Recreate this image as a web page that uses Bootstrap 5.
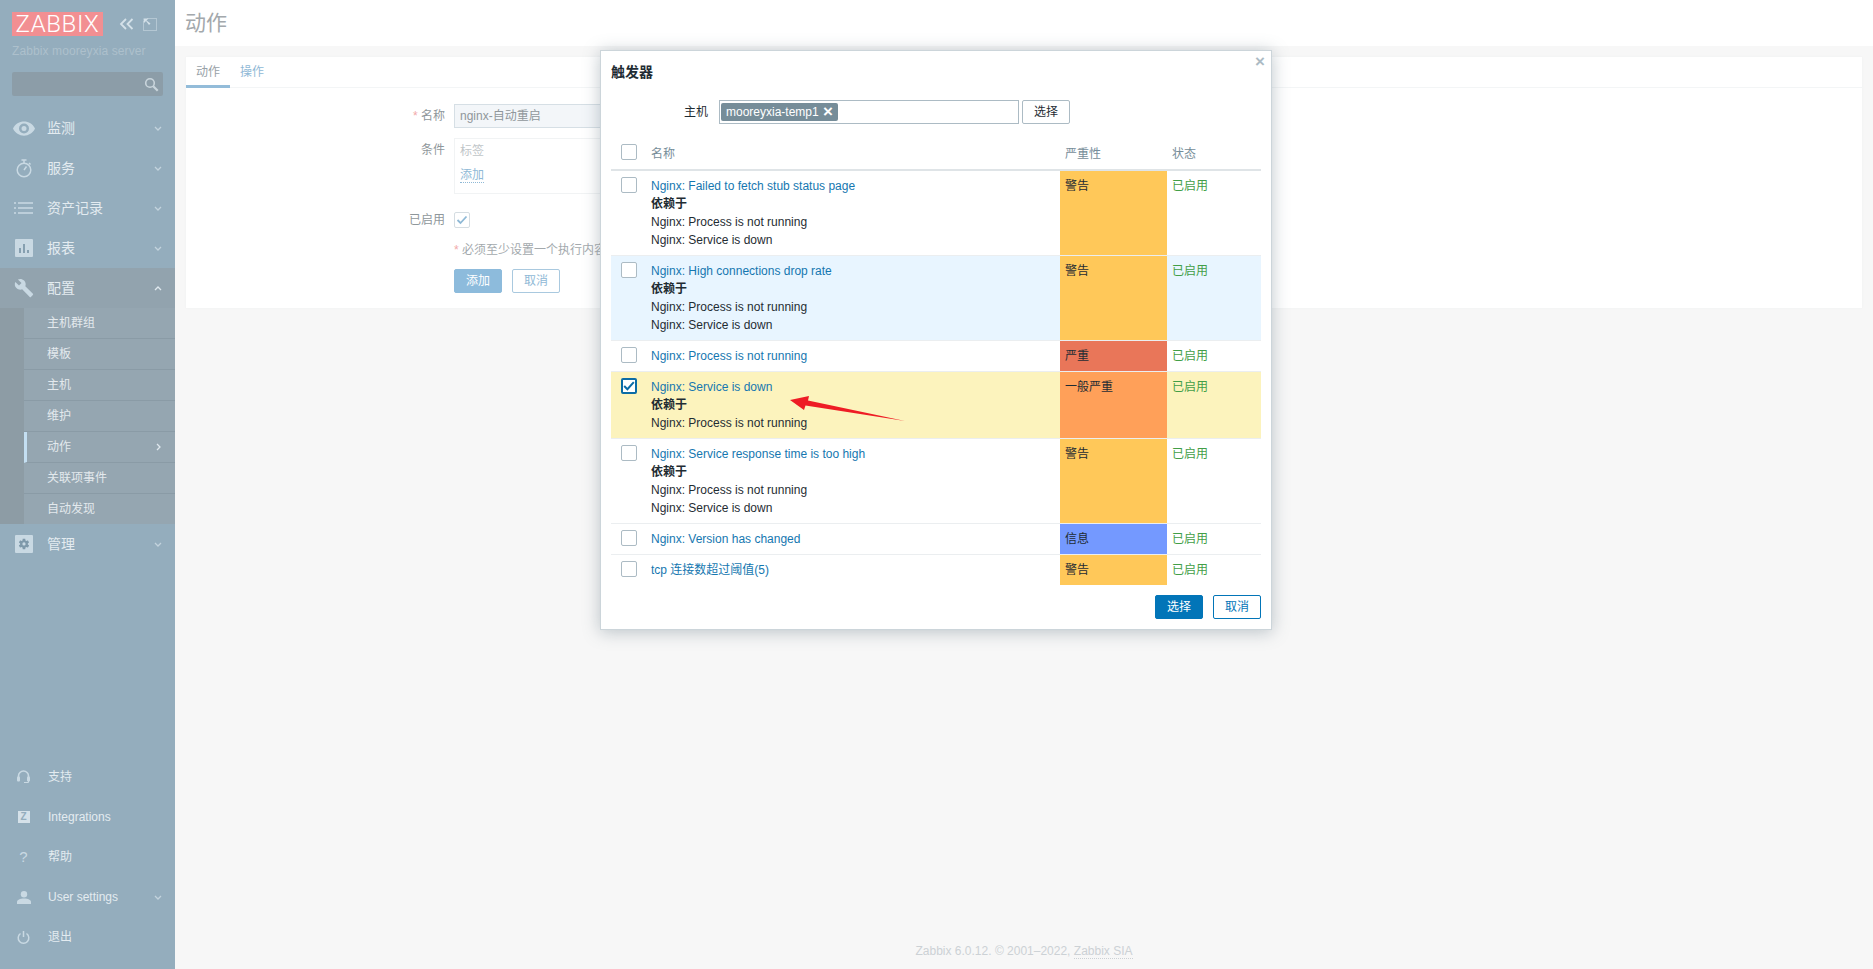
<!DOCTYPE html>
<html lang="zh">
<head>
  <meta charset="UTF-8" />
  <title>动作</title>
  <link href="https://cdn.jsdelivr.net/npm/bootstrap@5.3.0/dist/css/bootstrap.min.css" rel="stylesheet">
  <style>
    html, body { height: 100%; }
    body {
      font-family: "Liberation Sans", "Noto Sans CJK SC", sans-serif;
      font-size: 12px;
      line-height: 18px;
      color: #1f2c33;
      background: #f7f7f7;
      overflow: hidden;
    }
    a { text-decoration: none; }

    /* sidebar */
    .side-bar { width: 175px; background: #94adbd; color: #dfe8ee; flex: none; }
    .side-logo { width: 91px; height: 24px; background: #f28f92; color: #fff; font-family: Roboto, sans-serif; font-weight: 300; font-size: 24px; line-height: 24px; letter-spacing: .6px; text-align: center; }
    .side-head { padding: 12px 0 0 12px; height: 108px; }
    .side-tools { margin-left: 16px; gap: 9px; }
    .side-server { color: #adc0cc; margin-top: 6px; letter-spacing: .1px; }
    .side-search { width: 151px; height: 24px; margin-top: 12px; background: #8c9da8; border-radius: 2px; padding-right: 4px; }
    .menu-row { height: 40px; padding-left: 47px; padding-right: 13px; font-size: 14px; color: #e3ebf0; position: relative; }
    .menu-row.menu-open { background: #92a3ae; }
    .menu-low { font-size: 12px; padding-left: 48px; }
    .menu-ico { position: absolute; left: 0; top: 0; width: 47px; height: 40px; display: flex; align-items: center; justify-content: center; color: #c9d9e3; }
    .side-low { padding-bottom: 12px; }
    .sub-wrap { background: #8d9ca5; padding-left: 24px; }
    .sub-row { height: 31px; background: #95a6b1; border-bottom: 1px solid #8a9ba6; padding-left: 23px; padding-right: 14px; color: #e3e9ed; }
    .sub-row:last-child { border-bottom: 0; height: 30px; }
    .sub-row.sub-on { border-left: 3px solid #c4dff2; padding-left: 20px; }
    .z-box { width: 12px; height: 12px; background: #d5e1e9; color: #94adbd; font-weight: 700; font-size: 10px; line-height: 12px; text-align: center; }
    .q-mark { font-size: 15px; color: #c9d9e3; }

    /* page behind the dialog */
    .page-head { height: 46px; background: #fff; padding-left: 10px; font-size: 21px; line-height: 46px; color: #a3a8ac; }
    .page-card { margin: 11px 11px 0; background: #fff; height: 251px; box-shadow: 0 0 2px #f0f1f2; }
    .tab-bar { height: 31px; border-bottom: 1px solid #f3f5f6; }
    .tab-item { padding-top: 6px; width: 44px; height: 31px; text-align: center; color: #8fb9d6; }
    .tab-item.tab-on { color: #97a1a7; border-bottom: 3px solid #93bcd9; margin-right: 10px; width: 44px; }
    .tab-item + .tab-item { width: 24px; }
    .form-line { display: flex; margin-bottom: 10px; }
    .field-label { width: 259px; margin-right: 9px; text-align: right; color: #8f979b; padding-top: 3px; }
    .req { color: #f2a9a9; }
    .fake-input { width: 300px; height: 24px; background: #f3f6f9; border: 1px solid #d6dfe5; padding: 2px 5px; color: #90979b; }
    .cond-box { width: 700px; height: 56px; border: 1px solid #f1f3f4; padding: 3px 5px; color: #c0c5c8; }
    .dash-link { color: #8fb9d6; border-bottom: 1px dotted #8fb9d6; }
    .cond-add { margin-top: 6px; }
    .btn-add, .btn-off { width: 48px; height: 24px; font-size: 12px; line-height: 22px; padding: 0; border-radius: 2px; }
    .btn-add { background: #8dbbdc; border: 1px solid #8dbbdc; color: #fff; }
    .btn-off { background: #fff; border: 1px solid #a9c9df; color: #8fb9d6; margin-left: 10px; }
    .soft-tick { width: 16px; height: 16px; border: 1px solid #d5dde2; border-radius: 2px; }
    .on-label { margin-top: -1px; padding-top: 0; }
    .note-line { color: #a3a9ad; padding-top: 4px; }

    .page-foot { color: #ccd1d5; text-align: center; padding-bottom: 9px; }
    .foot-link { color: #ccd1d5; border-bottom: 1px dotted #ccd1d5; }

    /* dialog */
    .dlg-box { position: absolute; left: 600px; top: 50px; width: 672px; height: 580px; background: #fff; border: 1px solid #ccd5da; box-shadow: 0 2px 16px rgba(110, 128, 140, .45); padding: 12px 10px 9px 10px; }
    .dlg-close { position: absolute; right: 6px; top: 2px; color: #acbbc4; font-size: 17px; font-weight: 700; line-height: 18px; }
    .dlg-title { font-size: 14px; font-weight: 700; height: 18px; }
    .host-line { margin-top: 19px; height: 24px; }
    .host-label { width: 108px; padding-right: 11px; text-align: right; }
    .host-field { width: 300px; height: 24px; border: 1px solid #acbbc4; padding: 2px 2px 2px 1px; }
    .host-pill { background: #768d99; color: #fff; height: 18px; padding: 0 5px; border-radius: 2px; width: 117px; }
    .host-x { font-weight: 700; font-size: 17px; line-height: 18px; margin-left: auto; }
    .host-btn { width: 48px; height: 24px; margin-left: 3px; border: 1px solid #acbbc4; border-radius: 2px; background: #fff; font-size: 12px; line-height: 22px; padding: 0; color: #1f2c33; }
    .trig-table { table-layout: fixed; width: 650px; margin: 14px 0 0; border-collapse: collapse; }
    .trig-table th { font-weight: 400; color: #768d99; padding: 7px 5px 6px; height: 32px; border-bottom: 2px solid #dfe4e7; }
    .trig-table th.chk-cell { padding-top: 6px; vertical-align: top; }
    .trig-table td { padding: 6px 5px; border-bottom: 1px solid #ebeef0; vertical-align: top; color: #1f2c33; }
    .trig-table tr:last-child td { border-bottom: 0; }
    .trig-table .chk-cell { padding-left: 10px; padding-right: 0; }
    .row-hover td { background: #e8f5ff; }
    .row-picked td { background: #fcf3bd; }
    .trig-link { color: #1577b0; }
    .dep-head { font-weight: 700; }
    .trig-table td.state-on { color: #429e47; }
    .trig-table td.sev-warn { background: #ffc859; }
    .trig-table td.sev-high { background: #e97659; }
    .trig-table td.sev-avg { background: #ffa059; }
    .trig-table td.sev-info { background: #7499ff; }
    .tick-box { display: block; width: 16px; height: 16px; border: 1px solid #acbbc4; border-radius: 2px; background: #fff; }
    .tick-box.tick-on { border: 2px solid #0b6ca6; }
    .dlg-foot { margin-top: 10px; gap: 10px; }
    .btn-pick, .btn-back { width: 48px; height: 24px; font-size: 12px; line-height: 22px; padding: 0; border-radius: 2px; }
    .btn-pick { background: #0275b8; border: 1px solid #0275b8; color: #fff; }
    .btn-back { background: #fff; border: 1px solid #0275b8; color: #0275b8; }
    .arrow-mark { position: absolute; left: 189px; top: 345px; }
  </style>
</head>
<body class="d-flex position-relative">

  <svg width="0" height="0" class="position-absolute">
    <symbol id="chev-down" viewBox="0 0 8 5"><path d="M1 1l3 3 3-3" fill="none" stroke="#c3d3dd" stroke-width="1.3"/></symbol>
    <symbol id="chev-up" viewBox="0 0 8 5"><path d="M1 4l3-3 3 3" fill="none" stroke="#dfe8ee" stroke-width="1.3"/></symbol>
  </svg>

  <aside class="side-bar d-flex flex-column">
    <div class="side-head">
      <div class="d-flex align-items-center">
        <div class="side-logo">ZABBIX</div>
        <div class="side-tools d-flex align-items-center">
          <svg width="15" height="12" viewBox="0 0 15 12"><path d="M7 1L2 6l5 5M13.500 1l-5 5 5 5" fill="none" stroke="#d4e1e9" stroke-width="1.800"/></svg>
          <svg width="14" height="13" viewBox="0 0 14 13"><path d="M.5 3.500v9h13v-12h-9" fill="none" stroke="#d4e1e9" stroke-dasharray="1 1"/><path d="M.5.500h5l-2 2 4 3-1.500 1.500-3-4-2 2z" fill="#d4e1e9"/></svg>
        </div>
      </div>
      <div class="side-server">Zabbix mooreyxia server</div>
      <div class="side-search d-flex align-items-center justify-content-end">
        <svg width="15" height="15" viewBox="0 0 15 15"><circle cx="6" cy="6" r="4.300" fill="none" stroke="#c9d5dc" stroke-width="1.600"/><path d="M9.200 9.200l4.500 4.500" stroke="#c9d5dc" stroke-width="2.200"/></svg>
      </div>
    </div>

    <nav>
      <div class="menu-row d-flex align-items-center justify-content-between">
        <span class="menu-ico"><svg width="22" height="15" viewBox="0 0 22 15"><path fill-rule="evenodd" fill="currentColor" d="M0 7.500C4 -2 18 -2 22 7.500 18 17 4 17 0 7.500zM11 2.500a5 5 0 1 0 0 10 5 5 0 0 0 0-10zM11 5a2.500 2.500 0 1 1 0 5 2.500 2.500 0 0 1 0-5z"/></svg></span>
        监测 <svg width="8" height="5"><use href="#chev-down"/></svg>
      </div>
      <div class="menu-row d-flex align-items-center justify-content-between">
        <span class="menu-ico"><svg width="16" height="19" viewBox="0 0 16 19"><circle cx="8" cy="11" r="6.800" fill="none" stroke="currentColor" stroke-width="1.500"/><path d="M5.500 1h5M8 1v3M8 11l2.500-3.500M13 4l1.500 1.500" fill="none" stroke="currentColor" stroke-width="1.500"/></svg></span>
        服务 <svg width="8" height="5"><use href="#chev-down"/></svg>
      </div>
      <div class="menu-row d-flex align-items-center justify-content-between">
        <span class="menu-ico"><svg width="20" height="12" viewBox="0 0 20 12"><path d="M0 1h2M0 6h2M0 11h2M4 1h15M4 6h15M4 11h15" stroke="currentColor" stroke-width="1.500"/></svg></span>
        资产记录 <svg width="8" height="5"><use href="#chev-down"/></svg>
      </div>
      <div class="menu-row d-flex align-items-center justify-content-between">
        <span class="menu-ico"><svg width="18" height="18" viewBox="0 0 18 18"><rect width="18" height="18" rx="1" fill="currentColor"/><path d="M5 14v-5M9 14V5M13 14v-3" stroke="#7f99aa" stroke-width="1.800"/></svg></span>
        报表 <svg width="8" height="5"><use href="#chev-down"/></svg>
      </div>
      <div class="menu-row menu-open d-flex align-items-center justify-content-between">
        <span class="menu-ico"><svg width="20" height="20" viewBox="0 0 24 24"><path fill="currentColor" d="M22.700 19l-9.100-9.100c.9-2.300.4-5-1.500-6.900-2-2-5-2.400-7.400-1.300L9 6 6 9 1.600 4.700C.4 7.100.9 10.100 2.900 12.100c1.900 1.900 4.600 2.400 6.900 1.500l9.100 9.100c.4.400 1 .4 1.400 0l2.300-2.300c.5-.4.5-1.100.1-1.400z"/></svg></span>
        配置 <svg width="8" height="5"><use href="#chev-up"/></svg>
      </div>
      <div class="sub-wrap">
        <div class="sub-row d-flex align-items-center">主机群组</div>
        <div class="sub-row d-flex align-items-center">模板</div>
        <div class="sub-row d-flex align-items-center">主机</div>
        <div class="sub-row d-flex align-items-center">维护</div>
        <div class="sub-row sub-on d-flex align-items-center justify-content-between">动作 <svg width="5" height="8" viewBox="0 0 5 8"><path d="M1 1l3 3-3 3" fill="none" stroke="#dfe8ee" stroke-width="1.300"/></svg></div>
        <div class="sub-row d-flex align-items-center">关联项事件</div>
        <div class="sub-row d-flex align-items-center">自动发现</div>
      </div>
      <div class="menu-row d-flex align-items-center justify-content-between">
        <span class="menu-ico"><svg width="18" height="18" viewBox="0 0 18 18"><rect width="18" height="18" rx="1" fill="currentColor"/><g transform="translate(2.500 2.500) scale(.54)"><path fill="#7f99aa" d="M19.140 12.940c.04-.3.06-.61.06-.94 0-.32-.02-.64-.07-.94l2.030-1.580c.18-.14.23-.41.12-.61l-1.920-3.320c-.12-.22-.37-.29-.59-.22l-2.390.96c-.5-.38-1.030-.7-1.620-.94l-.36-2.540c-.04-.24-.24-.41-.48-.41h-3.840c-.24 0-.43.17-.47.41l-.36 2.540c-.59.24-1.130.57-1.620.94l-2.390-.96c-.22-.08-.47 0-.59.22L2.740 8.870c-.12.21-.08.47.12.61l2.030 1.580c-.05.3-.09.63-.09.94s.02.64.07.94l-2.030 1.580c-.18.14-.23.41-.12.61l1.920 3.320c.12.22.37.29.59.22l2.390-.96c.5.38 1.030.7 1.620.94l.36 2.540c.05.24.24.41.48.41h3.840c.24 0 .44-.17.47-.41l.36-2.540c.59-.24 1.130-.56 1.620-.94l2.390.96c.22.08.47 0 .59-.22l1.920-3.320c.12-.22.07-.47-.12-.61l-2.010-1.580z"/><circle cx="12" cy="12" r="3" fill="currentColor"/></g></svg></span>
        管理 <svg width="8" height="5"><use href="#chev-down"/></svg>
      </div>
    </nav>

    <nav class="side-low mt-auto">
      <div class="menu-row menu-low d-flex align-items-center justify-content-between">
        <span class="menu-ico"><svg width="13" height="14" viewBox="0 0 13 14"><path d="M1.500 8V6a5 5 0 0 1 10 0v2" fill="none" stroke="currentColor" stroke-width="1.600"/><rect x="0" y="6.500" width="3" height="5" rx="1" fill="currentColor"/><rect x="10" y="6.500" width="3" height="5" rx="1" fill="currentColor"/><path d="M11.500 11v1.500H7" fill="none" stroke="currentColor"/></svg></span>
        支持
      </div>
      <div class="menu-row menu-low d-flex align-items-center">
        <span class="menu-ico"><span class="z-box">Z</span></span>
        Integrations
      </div>
      <div class="menu-row menu-low d-flex align-items-center">
        <span class="menu-ico"><span class="q-mark">?</span></span>
        帮助
      </div>
      <div class="menu-row menu-low d-flex align-items-center justify-content-between">
        <span class="menu-ico"><svg width="14" height="13" viewBox="0 0 14 13"><circle cx="7" cy="3.300" r="3.200" fill="currentColor"/><path d="M0 13v-2c0-2 3-3.500 7-3.500s7 1.500 7 3.500v2z" fill="currentColor"/></svg></span>
        User settings <svg width="8" height="5"><use href="#chev-down"/></svg>
      </div>
      <div class="menu-row menu-low d-flex align-items-center">
        <span class="menu-ico"><svg width="13" height="13" viewBox="0 0 13 13"><path d="M3.500 2.500a5.300 5.300 0 1 0 6 0" fill="none" stroke="currentColor" stroke-width="1.500"/><path d="M6.500 0v6" stroke="currentColor" stroke-width="1.500"/></svg></span>
        退出
      </div>
    </nav>
  </aside>

  <main class="flex-grow-1 d-flex flex-column">
    <header class="page-head">动作</header>
    <section class="page-card">
      <div class="tab-bar d-flex">
        <div class="tab-item tab-on">动作</div>
        <div class="tab-item">操作</div>
      </div>
      <div class="pt-3">
        <div class="form-line">
          <div class="field-label"><span class="req">*</span> 名称</div>
          <div class="fake-input">nginx-自动重启</div>
        </div>
        <div class="form-line">
          <div class="field-label">条件</div>
          <div class="cond-box">
            <div>标签</div>
            <div class="cond-add"><span class="dash-link">添加</span></div>
          </div>
        </div>
        <div class="form-line mb-2 pt-2">
          <div class="field-label on-label">已启用</div>
          <div class="soft-tick d-flex align-items-center justify-content-center">
            <svg width="12" height="10" viewBox="0 0 12 10"><path d="M1.500 5l3 3 6-6.500" fill="none" stroke="#8fb9d6" stroke-width="1.800"/></svg>
          </div>
        </div>
        <div class="form-line">
          <div class="field-label"></div>
          <div class="note-line"><span class="req">*</span> 必须至少设置一个执行内容</div>
        </div>
        <div class="form-line">
          <div class="field-label"></div>
          <div class="d-flex">
            <button class="btn-add" type="button">添加</button>
            <button class="btn-off" type="button">取消</button>
          </div>
        </div>
      </div>
    </section>
    <footer class="page-foot mt-auto">Zabbix 6.0.12. © 2001–2022, <span class="foot-link">Zabbix SIA</span></footer>
  </main>

  <div class="dlg-box">
    <span class="dlg-close">×</span>
    <div class="dlg-title">触发器</div>
    <div class="host-line d-flex">
      <div class="host-label align-self-center">主机</div>
      <div class="host-field">
        <div class="host-pill d-flex align-items-center">mooreyxia-temp1 <span class="host-x">×</span></div>
      </div>
      <button class="host-btn" type="button">选择</button>
    </div>

    <table class="trig-table">
      <colgroup><col style="width:35px"><col style="width:414px"><col style="width:107px"><col style="width:94px"></colgroup>
      <thead>
        <tr><th class="chk-cell"><span class="tick-box"></span></th><th>名称</th><th>严重性</th><th>状态</th></tr>
      </thead>
      <tbody>
        <tr>
          <td class="chk-cell"><span class="tick-box"></span></td>
          <td><a class="trig-link" href="#">Nginx: Failed to fetch stub status page</a><div class="dep-head">依赖于</div><div>Nginx: Process is not running</div><div>Nginx: Service is down</div></td>
          <td class="sev-warn">警告</td><td class="state-on">已启用</td>
        </tr>
        <tr class="row-hover">
          <td class="chk-cell"><span class="tick-box"></span></td>
          <td><a class="trig-link" href="#">Nginx: High connections drop rate</a><div class="dep-head">依赖于</div><div>Nginx: Process is not running</div><div>Nginx: Service is down</div></td>
          <td class="sev-warn">警告</td><td class="state-on">已启用</td>
        </tr>
        <tr>
          <td class="chk-cell"><span class="tick-box"></span></td>
          <td><a class="trig-link" href="#">Nginx: Process is not running</a></td>
          <td class="sev-high">严重</td><td class="state-on">已启用</td>
        </tr>
        <tr class="row-picked">
          <td class="chk-cell"><span class="tick-box tick-on d-flex align-items-center justify-content-center"><svg width="12" height="10" viewBox="0 0 12 10"><path d="M1.200 5l3.200 3.200 6.400-7" fill="none" stroke="#0b6ca6" stroke-width="2"/></svg></span></td>
          <td><a class="trig-link" href="#">Nginx: Service is down</a><div class="dep-head">依赖于</div><div>Nginx: Process is not running</div></td>
          <td class="sev-avg">一般严重</td><td class="state-on">已启用</td>
        </tr>
        <tr>
          <td class="chk-cell"><span class="tick-box"></span></td>
          <td><a class="trig-link" href="#">Nginx: Service response time is too high</a><div class="dep-head">依赖于</div><div>Nginx: Process is not running</div><div>Nginx: Service is down</div></td>
          <td class="sev-warn">警告</td><td class="state-on">已启用</td>
        </tr>
        <tr>
          <td class="chk-cell"><span class="tick-box"></span></td>
          <td><a class="trig-link" href="#">Nginx: Version has changed</a></td>
          <td class="sev-info">信息</td><td class="state-on">已启用</td>
        </tr>
        <tr>
          <td class="chk-cell"><span class="tick-box"></span></td>
          <td><a class="trig-link" href="#">tcp 连接数超过阈值(5)</a></td>
          <td class="sev-warn">警告</td><td class="state-on">已启用</td>
        </tr>
      </tbody>
    </table>

    <div class="dlg-foot d-flex justify-content-end">
      <button class="btn-pick" type="button">选择</button>
      <button class="btn-back" type="button">取消</button>
    </div>

    <svg class="arrow-mark" width="116" height="26" viewBox="0 0 116 26"><path d="M0 4L19 0l-1 4.500L115 25 15.500 9.500 14 14z" fill="#ee1c25"/></svg>
  </div>

  <script src="https://cdn.jsdelivr.net/npm/bootstrap@5.3.0/dist/js/bootstrap.bundle.min.js"></script>
</body>
</html>
